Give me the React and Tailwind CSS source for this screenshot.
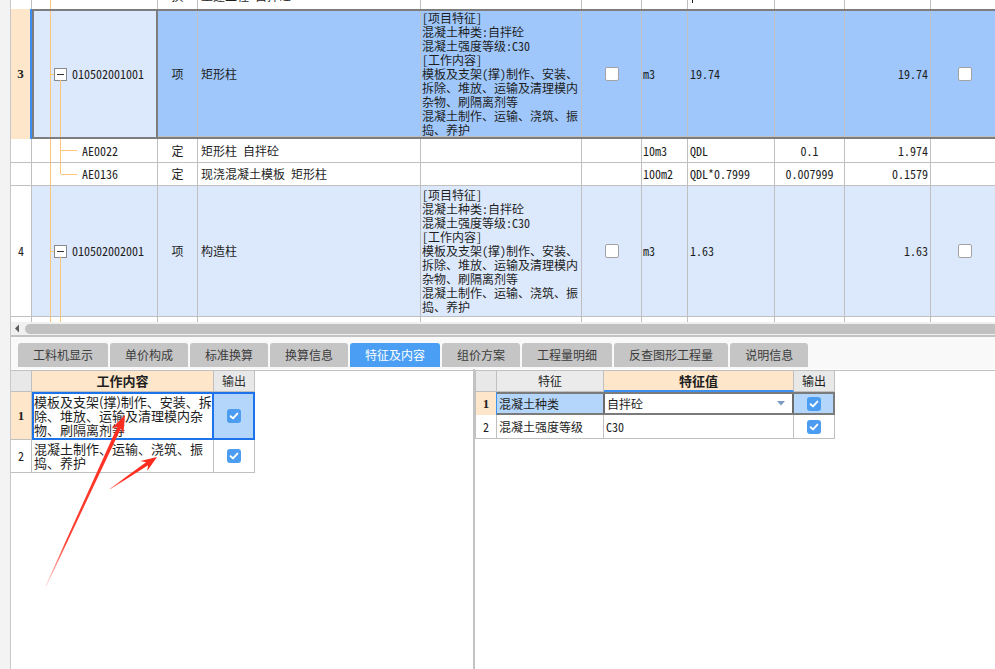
import React from 'react';

const featureLines = [
  '[项目特征]',
  '混凝土种类:自拌砼',
  '混凝土强度等级:C30',
  '[工作内容]',
  '模板及支架(撑)制作、安装、',
  '拆除、堆放、运输及清理模内',
  '杂物、刷隔离剂等',
  '混凝土制作、运输、浇筑、振',
  '捣、养护',
];

const tabs = ['工料机显示', '单价构成', '标准换算', '换算信息', '特征及内容', '组价方案', '工程量明细', '反查图形工程量', '说明信息'];

const EmptyBox = () => (
  <span className="block w-[14px] h-[14px] rounded-[2px] border border-[#a3a3a3] bg-white" />
);

const BlueCheck = () => (
  <span className="flex w-[14px] h-[14px] items-center justify-center rounded-[3px] bg-[#4c9cf1]">
    <svg width="10" height="10" viewBox="0 0 10 10">
      <path d="M1.6 5.2 L4 7.4 L8.4 2.6" fill="none" stroke="white" strokeWidth="1.9" strokeLinecap="round" strokeLinejoin="round" />
    </svg>
  </span>
);

const MinusBox = () => (
  <span className="flex w-[13px] h-[13px] shrink-0 items-center justify-center border border-[#8a8a8a] bg-white">
    <span className="block w-[7px] h-px bg-[#333]" />
  </span>
);

// columns after the code column, shared by every row of the upper grid
const RestCells = ({ type, name, feature, check, unit, expr, coef, qty, bg = '' }) => (
  <>
    <div className={`w-[40px] shrink-0 border-r border-b border-[#c0c0c0] flex items-center justify-center ${bg}`}>{type}</div>
    <div className={`w-[223px] shrink-0 border-r border-b border-[#c0c0c0] flex items-center pl-[3px] whitespace-nowrap ${bg}`}>{name}</div>
    <div className={`w-[161px] shrink-0 border-r border-b border-[#c0c0c0] flex flex-col justify-center pl-[1px] leading-[14px] whitespace-nowrap ${bg}`}>
      {feature && feature.map((l, i) => <div key={i}>{l}</div>)}
    </div>
    <div className={`w-[60px] shrink-0 border-r border-b border-[#c0c0c0] flex items-center justify-center ${bg}`}>{check && <EmptyBox />}</div>
    <div className={`w-[46px] shrink-0 border-r border-b border-[#c0c0c0] flex items-center pl-[1px] ${bg}`}>{unit}</div>
    <div className={`w-[87px] shrink-0 border-r border-b border-[#c0c0c0] flex items-center pl-[2px] whitespace-nowrap ${bg}`}>{expr}</div>
    <div className={`w-[70px] shrink-0 border-r border-b border-[#c0c0c0] flex items-center justify-center ${bg}`}>{coef}</div>
    <div className={`w-[86px] shrink-0 border-r border-b border-[#c0c0c0] flex items-center justify-end pr-[2px] ${bg}`}>{qty}</div>
    <div className={`w-[68px] shrink-0 border-r border-b border-[#c0c0c0] flex items-center justify-center ${bg}`}>{check && <EmptyBox />}</div>
  </>
);

const UpperGrid = () => (
  <div className="h-[322px] overflow-hidden font-['Noto_Sans_Mono_CJK_SC','Liberation_Mono','Noto_Sans_CJK_SC',monospace] text-[12px] text-[#1e1e1e]">
    {/* row cut off at the top */}
    <div className="flex h-[9px] w-[1000px] overflow-hidden">
      <div className="w-[21px] shrink-0 border-r border-[#c0c0c0]" />
      <div className="relative w-[126px] shrink-0 border-r border-[#c0c0c0]">
        <span className="absolute left-[18px] top-0 bottom-0 w-px bg-[#fcc57b]" />
      </div>
      <div className="w-[40px] shrink-0 border-r border-[#c0c0c0] flex justify-center">
        <span className="-mt-[11px] leading-[14px]">换</span>
      </div>
      <div className="w-[223px] shrink-0 border-r border-[#c0c0c0] pl-[3px]">
        <span className="block -mt-[11px] leading-[14px]">土建工程 自拌砼</span>
      </div>
      <div className="w-[161px] shrink-0 border-r border-[#c0c0c0]" />
      <div className="w-[60px] shrink-0 border-r border-[#c0c0c0]" />
      <div className="w-[46px] shrink-0 border-r border-[#c0c0c0]" />
      <div className="w-[87px] shrink-0 border-r border-[#c0c0c0] pl-[4px]">
        <span className="block w-px h-[3px] bg-[#1e1e1e]" />
      </div>
      <div className="w-[70px] shrink-0 border-r border-[#c0c0c0]" />
      <div className="w-[86px] shrink-0 border-r border-[#c0c0c0]" />
      <div className="w-[68px] shrink-0 border-r border-[#c0c0c0]" />
    </div>

    {/* row 3, selected */}
    <div className="flex h-[130px] w-[1000px]">
      <div className="w-[21px] shrink-0 bg-[#fde6c9] border-r-2 border-r-[#3b8df0] flex items-center justify-center font-['Liberation_Serif',serif] font-bold text-[13px]">3</div>
      <div className="flex border-2 border-[#7d7d7d] bg-[#9fc7fb]">
        <div className="relative w-[124px] shrink-0 border-r-2 border-[#7d7d7d] bg-[#dce9fc] flex items-center pl-[17px]">
          <span className="absolute left-[16px] top-0 bottom-0 w-px bg-[#fcc57b]" />
          <span className="absolute left-[26px] top-[69px] bottom-0 w-px bg-[#fcc57b]" />
          <span className="w-[3px] h-px bg-[#fcc57b]" />
          <MinusBox />
          <span className="ml-[5px]">010502001001</span>
        </div>
        <RestCells type="项" name="矩形柱" feature={featureLines} check unit="m3" expr="19.74" qty="19.74" />
      </div>
    </div>

    {/* child rows */}
    {[
      { code: 'AE0022', name: '矩形柱 自拌砼', unit: '10m3', expr: 'QDL', coef: '0.1', qty: '1.974', h: 'h-[24px]', last: false },
      { code: 'AE0136', name: '现浇混凝土模板 矩形柱', unit: '100m2', expr: 'QDL*0.7999', coef: '0.007999', qty: '0.1579', h: 'h-[23px]', last: true },
    ].map((r) => (
      <div key={r.code} className={`flex ${r.h} w-[1000px]`}>
        <div className="w-[21px] shrink-0 border-r border-b border-[#c0c0c0]" />
        <div className="relative w-[126px] shrink-0 border-r border-b border-[#c0c0c0] flex items-center pl-[29px]">
          <span className="absolute left-[18px] top-0 bottom-0 w-px bg-[#fcc57b]" />
          {r.last ? (
            <span className="absolute left-[28px] top-0 h-[11px] w-px bg-[#fcc57b]" />
          ) : (
            <span className="absolute left-[28px] top-0 bottom-0 w-px bg-[#fcc57b]" />
          )}
          <span className="w-[16px] h-px bg-[#fcc57b]" />
          <span className="ml-[5px]">{r.code}</span>
        </div>
        <RestCells type="定" name={r.name} unit={r.unit} expr={r.expr} coef={r.coef} qty={r.qty} />
      </div>
    ))}

    {/* row 4 */}
    <div className="flex h-[131px] w-[1000px]">
      <div className="w-[21px] shrink-0 border-r border-b border-[#c0c0c0] flex items-center justify-center">4</div>
      <div className="relative w-[126px] shrink-0 border-r border-b border-[#c0c0c0] bg-[#dce9fc] flex items-center pl-[19px]">
        <span className="absolute left-[18px] top-0 bottom-0 w-px bg-[#fcc57b]" />
        <span className="absolute left-[28px] top-[71px] bottom-0 w-px bg-[#fcc57b]" />
        <span className="w-[3px] h-px bg-[#fcc57b]" />
        <MinusBox />
        <span className="ml-[5px]">010502002001</span>
      </div>
      <RestCells type="项" name="构造柱" feature={featureLines} check unit="m3" expr="1.63" qty="1.63" bg="bg-[#dce9fc]" />
    </div>

    {/* next row, only its top shows */}
    <div className="flex h-[5px] w-[1000px]">
      <div className="w-[21px] shrink-0 border-r border-[#c0c0c0]" />
      <div className="relative w-[126px] shrink-0 border-r border-[#c0c0c0]">
        <span className="absolute left-[18px] top-0 bottom-0 w-px bg-[#fcc57b]" />
        <span className="absolute left-[28px] top-0 bottom-0 w-px bg-[#fcc57b]" />
      </div>
      <div className="w-[40px] shrink-0 border-r border-[#c0c0c0]" />
      <div className="w-[223px] shrink-0 border-r border-[#c0c0c0]" />
      <div className="w-[161px] shrink-0 border-r border-[#c0c0c0]" />
      <div className="w-[60px] shrink-0 border-r border-[#c0c0c0]" />
      <div className="w-[46px] shrink-0 border-r border-[#c0c0c0]" />
      <div className="w-[87px] shrink-0 border-r border-[#c0c0c0]" />
      <div className="w-[70px] shrink-0 border-r border-[#c0c0c0]" />
      <div className="w-[86px] shrink-0 border-r border-[#c0c0c0]" />
      <div className="w-[68px] shrink-0 border-r border-[#c0c0c0]" />
    </div>
  </div>
);

const WorkTable = () => (
  <div className="mt-[1px] text-[13px] text-[#1e1e1e]">
    <div className="flex h-[22px] border-t border-[#c0c0c0]">
      <div className="w-[21px] shrink-0 border-r border-b border-[#c0c0c0] bg-[#e8e8e8]" />
      <div className="w-[182px] shrink-0 border-r border-b border-[#c0c0c0] bg-[#fde6c9] flex items-center justify-center font-bold">工作内容</div>
      <div className="w-[41px] shrink-0 border-r border-b border-[#c0c0c0] bg-[#e8e8e8] flex items-center justify-center text-[12px] text-[#333]">输出</div>
    </div>
    <div className="flex h-[48px]">
      <div className="w-[21px] shrink-0 border-r border-b border-[#c0c0c0] bg-[#fde6c9] flex items-center justify-center font-['Liberation_Serif',serif] font-bold">1</div>
      <div className="flex w-[223px] shrink-0 border-2 border-[#1f73ea]">
        <div className="w-[180px] shrink-0 border-r-2 border-[#1f73ea] bg-white flex flex-col justify-center leading-[14px] whitespace-nowrap">
          <div>模板及支架(撑)制作、安装、拆</div>
          <div>除、堆放、运输及清理模内杂</div>
          <div>物、刷隔离剂等</div>
        </div>
        <div className="flex-1 bg-[#b5d6fb] flex items-center justify-center"><BlueCheck /></div>
      </div>
    </div>
    <div className="flex h-[33px]">
      <div className="w-[21px] shrink-0 border-r border-b border-[#c0c0c0] flex items-center justify-center font-['Noto_Sans_Mono_CJK_SC','Liberation_Mono',monospace] text-[12px]">2</div>
      <div className="w-[182px] shrink-0 border-r border-b border-[#c0c0c0] pl-[2px] flex flex-col justify-center leading-[14px] whitespace-nowrap">
        <div>混凝土制作、运输、浇筑、振</div>
        <div>捣、养护</div>
      </div>
      <div className="w-[41px] shrink-0 border-r border-b border-[#c0c0c0] flex items-center justify-center"><BlueCheck /></div>
    </div>
  </div>
);

const FeatureTable = () => (
  <div className="mt-[1px] text-[12px] text-[#1e1e1e]">
    <div className="flex h-[22px] border-t border-[#c0c0c0]">
      <div className="w-[22px] shrink-0 border-x border-b border-[#c0c0c0] bg-[#e8e8e8]" />
      <div className="w-[107px] shrink-0 border-r border-b border-[#c0c0c0] bg-[#ebebeb] flex items-center justify-center">特征</div>
      <div className="w-[190px] shrink-0 border-r border-[#c0c0c0] border-b-2 border-b-[#3d8ff0] bg-[#fde6c9] flex items-center justify-center font-bold text-[13px]">特征值</div>
      <div className="w-[41px] shrink-0 border-r border-b border-[#c0c0c0] bg-[#e8e8e8] flex items-center justify-center">输出</div>
    </div>
    <div className="flex h-[23px]">
      <div className="w-[22px] shrink-0 border-l border-[#c0c0c0] border-r border-r-[#3d8ff0] bg-[#fde6c9] flex items-center justify-center font-['Liberation_Serif',serif] font-bold text-[13px]">1</div>
      <div className="flex w-[338px] shrink-0 border-y-2 border-r-2 border-[#7b7b7b]">
        <div className="w-[106px] shrink-0 bg-[#b5d6fb] flex items-center pl-[2px]">混凝土种类</div>
        <div className="w-[191px] shrink-0 border-x-2 border-[#6c6c6c] bg-white flex items-center justify-between pl-[2px] pr-[7px]">
          <span>自拌砼</span>
          <svg width="8" height="5" viewBox="0 0 8 5"><path d="M0 0 L8 0 L4 4.5 Z" fill="#7b9cc2" /></svg>
        </div>
        <div className="flex-1 bg-[#b5d6fb] flex items-center justify-center"><BlueCheck /></div>
      </div>
    </div>
    <div className="flex h-[24px]">
      <div className="w-[22px] shrink-0 border-x border-b border-[#c0c0c0] flex items-center justify-center font-['Noto_Sans_Mono_CJK_SC','Liberation_Mono',monospace]">2</div>
      <div className="w-[107px] shrink-0 border-r border-b border-[#c0c0c0] flex items-center pl-[2px]">混凝土强度等级</div>
      <div className="w-[190px] shrink-0 border-r border-b border-[#c0c0c0] flex items-center pl-[2px] font-['Noto_Sans_Mono_CJK_SC','Liberation_Mono',monospace]">C30</div>
      <div className="w-[41px] shrink-0 border-r border-b border-[#c0c0c0] flex items-center justify-center"><BlueCheck /></div>
    </div>
  </div>
);

const arrowPoints = (x1, y1, x2, y2, head, hw, neck) => {
  const dx = x2 - x1;
  const dy = y2 - y1;
  const len = Math.hypot(dx, dy);
  const ux = dx / len;
  const uy = dy / len;
  const nx = -uy;
  const ny = ux;
  const bx = x2 - ux * head;
  const by = y2 - uy * head;
  const p = (x, y) => `${x.toFixed(1)},${y.toFixed(1)}`;
  return [
    p(x1 + nx * 0.4, y1 + ny * 0.4),
    p(bx + ux * 3 + nx * neck, by + uy * 3 + ny * neck),
    p(bx - ux * 1 + nx * hw, by - uy * 1 + ny * hw),
    p(x2, y2),
    p(bx - ux * 1 - nx * hw, by - uy * 1 - ny * hw),
    p(bx + ux * 3 - nx * neck, by + uy * 3 - ny * neck),
    p(x1 - nx * 0.4, y1 - ny * 0.4),
  ].join(' ');
};

const Arrows = () => (
  <svg className="absolute inset-0 pointer-events-none" width="995" height="669">
    <defs>
      <linearGradient id="a1" gradientUnits="userSpaceOnUse" x1="46" y1="586" x2="125" y2="415">
        <stop offset="0" stopColor="#fe2c1e" stopOpacity="0.15" />
        <stop offset="0.25" stopColor="#fe2c1e" stopOpacity="0.9" />
        <stop offset="1" stopColor="#fe2c1e" />
      </linearGradient>
      <linearGradient id="a2" gradientUnits="userSpaceOnUse" x1="110" y1="489" x2="157" y2="457">
        <stop offset="0" stopColor="#fe2c1e" stopOpacity="0.5" />
        <stop offset="0.3" stopColor="#fe2c1e" />
        <stop offset="1" stopColor="#fe2c1e" />
      </linearGradient>
    </defs>
    <polygon points={arrowPoints(46, 586, 125, 415, 17, 6.5, 2)} fill="url(#a1)" />
    <polygon points={arrowPoints(110, 489, 157, 457, 15, 6, 1.8)} fill="url(#a2)" />
  </svg>
);

const App = () => (
  <div className="relative w-[995px] h-[669px] overflow-hidden bg-white flex font-['Noto_Sans_CJK_SC',sans-serif]">
    <div className="w-[11px] shrink-0 bg-[#f3f3f3] border-r border-[#c8c8c8]" />
    <div className="flex-1 min-w-0 flex flex-col">
      <UpperGrid />

      <div className="h-[13px] bg-[#f0f0f0] flex items-center">
        <svg width="14" height="13" className="shrink-0">
          <path d="M4 6.5 L8 2.5 L8 10.5 Z" fill="#5c5c5c" />
        </svg>
        <div className="h-[10px] flex-1 rounded-l-full bg-[#c1c1c1]" />
      </div>
      <div className="h-[2px] bg-[#c3c3c3]" />

      <div className="h-[32px] shrink-0 bg-[#f9f9f9] flex gap-[2px] pl-[7px] pt-[6px]">
        {tabs.map((t) => (
          <div
            key={t}
            className={`h-[24px] px-[15px] flex items-center rounded-t-[3px] text-[12px] whitespace-nowrap ${t === '特征及内容' ? 'bg-[#4a9ff5] text-white' : 'bg-[#c5c5c5] text-[#3c3c3c]'}`}
          >
            {t}
          </div>
        ))}
      </div>

      <div className="flex-1 flex">
        <div className="w-[464px] shrink-0 border-r-2 border-[#c3c3c3] bg-white">
          <WorkTable />
        </div>
        <div className="flex-1 bg-white">
          <FeatureTable />
        </div>
      </div>
    </div>
    <Arrows />
  </div>
);

export default App;
